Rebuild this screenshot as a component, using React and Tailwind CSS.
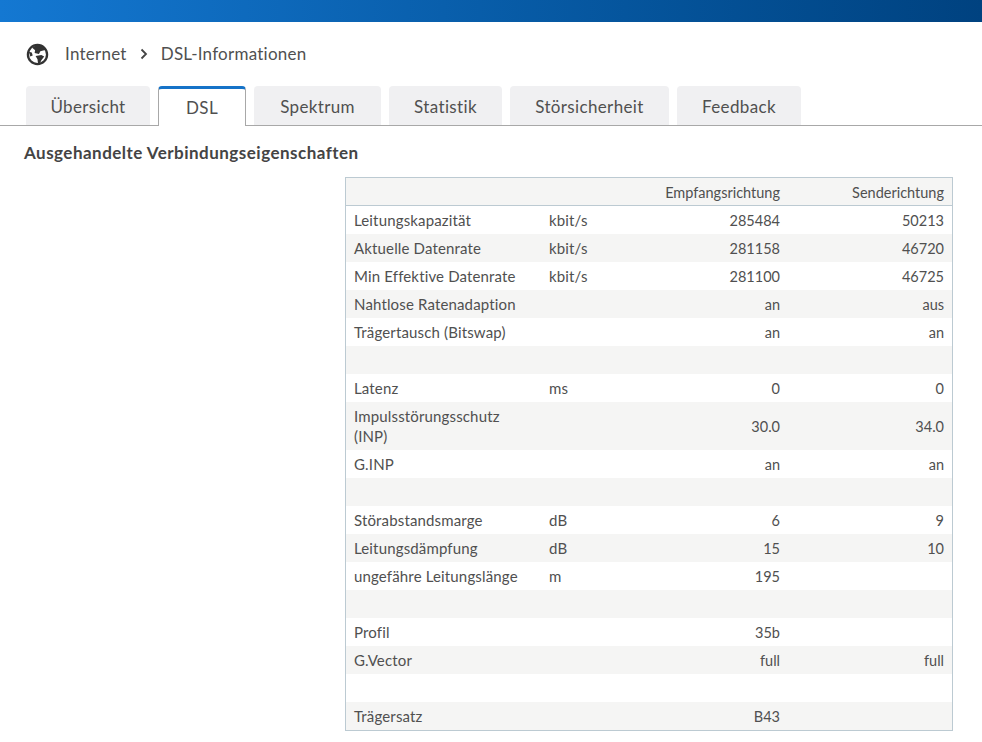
const tabs = ['Übersicht', 'DSL', 'Spektrum', 'Statistik', 'Störsicherheit', 'Feedback']

const tabWidths = {
  'Übersicht': 'w-[124px]',
  DSL: 'w-[88px]',
  Spektrum: 'w-[127px]',
  Statistik: 'w-[113px]',
  'Störsicherheit': 'w-[159px]',
  Feedback: 'w-[124px]',
}

const rows = [
  ['Leitungskapazität', 'kbit/s', '285484', '50213'],
  ['Aktuelle Datenrate', 'kbit/s', '281158', '46720'],
  ['Min Effektive Datenrate', 'kbit/s', '281100', '46725'],
  ['Nahtlose Ratenadaption', '', 'an', 'aus'],
  ['Trägertausch (Bitswap)', '', 'an', 'an'],
  ['', '', '', ''],
  ['Latenz', 'ms', '0', '0'],
  ['Impulsstörungsschutz (INP)', '', '30.0', '34.0'],
  ['G.INP', '', 'an', 'an'],
  ['', '', '', ''],
  ['Störabstandsmarge', 'dB', '6', '9'],
  ['Leitungsdämpfung', 'dB', '15', '10'],
  ['ungefähre Leitungslänge', 'm', '195', ''],
  ['', '', '', ''],
  ['Profil', '', '35b', ''],
  ['G.Vector', '', 'full', 'full'],
  ['', '', '', ''],
  ['Trägersatz', '', 'B43', ''],
]

function Globe() {
  return (
    <svg viewBox="0 0 24 24" className="w-[23px] h-[23px]">
      <circle cx="12" cy="12" r="10" fill="none" stroke="#333" strokeWidth="2.400" />
      <path fill="#333" d="M9 3l7-.5 5 4.500-6 1.500-1.500 3-4.500-1 .5-3-3-2.500z" />
      <path fill="#333" d="M10 13.500l6-1 3 1.500-3 4-1.500 3.500-2 -.5-.5-4z" />
      <path fill="#333" d="M3 9l3 1 1 3-2.500 1z" />
    </svg>
  )
}

function Row({ cells, index }) {
  const stripe = index % 2 === 1 ? 'bg-[#f5f5f4]' : 'bg-white'
  return (
    <div className={`flex items-center ${stripe} min-h-[28px] text-[15px] leading-[20px] tracking-[0.15px]`}>
      <div className={`w-[195px] pl-2 pr-3 ${cells[0].includes('(INP)') ? 'py-1' : ''}`}>{cells[0]}</div>
      <div className="w-[90px] pl-[8px]">{cells[1]}</div>
      <div className="w-[157px] pt-[2px] pr-2 text-right text-[14.5px] tracking-normal">{cells[2]}</div>
      <div className="w-[164px] pt-[2px] pr-2 text-right text-[14.5px] tracking-normal">{cells[3]}</div>
    </div>
  )
}

export default function App() {
  return (
    <div className="w-[982px] h-[742px] overflow-hidden bg-white font-['Lato','Noto_Sans',sans-serif] text-[#505050] [font-variant-ligatures:none]">
      <div className="h-[22px] bg-gradient-to-r from-[#1478d2] to-[#004280]" />

      <div className="flex items-center h-[64px] pl-[26px] text-[17px] tracking-[0.25px]">
        <Globe />
        <span className="ml-[16px]">Internet</span>
        <svg viewBox="0 0 10 12" className="w-[10px] h-[12px] ml-[12px]">
          <path d="M2.500 1.500L7 6l-4.500 4.500" fill="none" stroke="#444" strokeWidth="1.800" />
        </svg>
        <span className="ml-[12px]">DSL-Informationen</span>
      </div>

      <div className="flex items-end gap-2 h-[40px] pl-[26px] border-b border-[#a8a8a8] text-[17px] tracking-[0.35px]">
        {tabs.map(tab =>
          tab === 'DSL' ? (
            <div
              key={tab}
              className={`${tabWidths[tab]} h-[40px] -mb-px pt-[1px] flex items-center justify-center bg-white border-x border-[#a8a8a8] border-t-[3px] border-t-[#1673c8] rounded-t`}
            >
              {tab}
            </div>
          ) : (
            <div
              key={tab}
              className={`${tabWidths[tab]} h-[39px] pt-[3px] flex items-center justify-center bg-[#f0f0f2] rounded-t`}
            >
              {tab}
            </div>
          )
        )}
      </div>

      <h2 className="pl-6 mt-[17px] text-[17px] leading-[20px] font-bold tracking-[0.48px] text-[#444444]">
        Ausgehandelte Verbindungseigenschaften
      </h2>

      <div className="ml-[345px] mt-[14px] w-[608px] border border-[#bccad2]">
        <div className="flex items-center h-[28px] pt-[2px] bg-[#f5f5f4] border-b border-[#bccad2] text-[14.5px]">
          <div className="w-[285px]" />
          <div className="w-[157px] pr-2 text-right">Empfangsrichtung</div>
          <div className="w-[164px] pr-2 text-right">Senderichtung</div>
        </div>
        {rows.map((cells, i) => (
          <Row key={i} cells={cells} index={i} />
        ))}
      </div>
    </div>
  )
}
